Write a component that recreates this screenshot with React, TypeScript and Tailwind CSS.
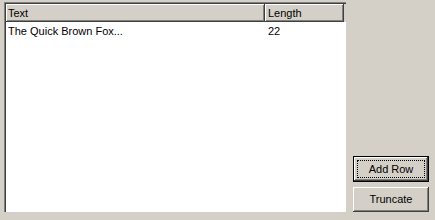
import React from 'react';

const rows = [{ text: 'The Quick Brown Fox...', length: 22 }];

export default function App() {
  return (
    <div className="flex w-[435px] h-[220px] bg-[#d4d0c8] text-[11px] text-black font-['Liberation_Sans',Arial,sans-serif] overflow-hidden">
      <div className="ml-[4px] mt-[2px] w-[342px] h-[210px] border-l border-t border-[#808080] flex">
        <div className="flex-1 flex flex-col border-l border-t border-[#404040] bg-white">
          <div className="flex h-[18px] shrink-0 bg-[#d4d0c8]">
            <div className="w-[259px] flex items-center pl-[2px] shadow-[inset_-1px_-1px_0_#404040,inset_1px_1px_0_#ffffff,inset_-2px_-2px_0_#808080]">
              Text
            </div>
            <div className="w-[79px] flex items-center pl-[3px] shadow-[inset_-1px_-1px_0_#404040,inset_1px_1px_0_#ffffff,inset_-2px_-2px_0_#808080]">
              Length
            </div>
          </div>
          {rows.map(row => (
            <div key={row.text} className="flex h-[16px] items-center mt-[1px]">
              <div className="w-[259px] pl-[2px]">{row.text}</div>
              <div className="pl-[3px]">{row.length}</div>
            </div>
          ))}
        </div>
      </div>

      <div className="ml-[7px] flex flex-col justify-end gap-[5px] pb-[8px]">
        <button className="w-[76px] h-[26px] border border-black bg-[#d4d0c8] shadow-[inset_-1px_-1px_0_#404040,inset_1px_1px_0_#ffffff,inset_-2px_-2px_0_#808080] flex items-center justify-center p-[4px]">
          <span className="flex-1 h-full flex items-center justify-center outline outline-1 outline-dotted outline-black">
            Add Row
          </span>
        </button>
        <button className="w-[76px] h-[25px] bg-[#d4d0c8] shadow-[inset_-1px_-1px_0_#404040,inset_1px_1px_0_#ffffff,inset_-2px_-2px_0_#808080] flex items-center justify-center">
          Truncate
        </button>
      </div>
    </div>
  );
}
